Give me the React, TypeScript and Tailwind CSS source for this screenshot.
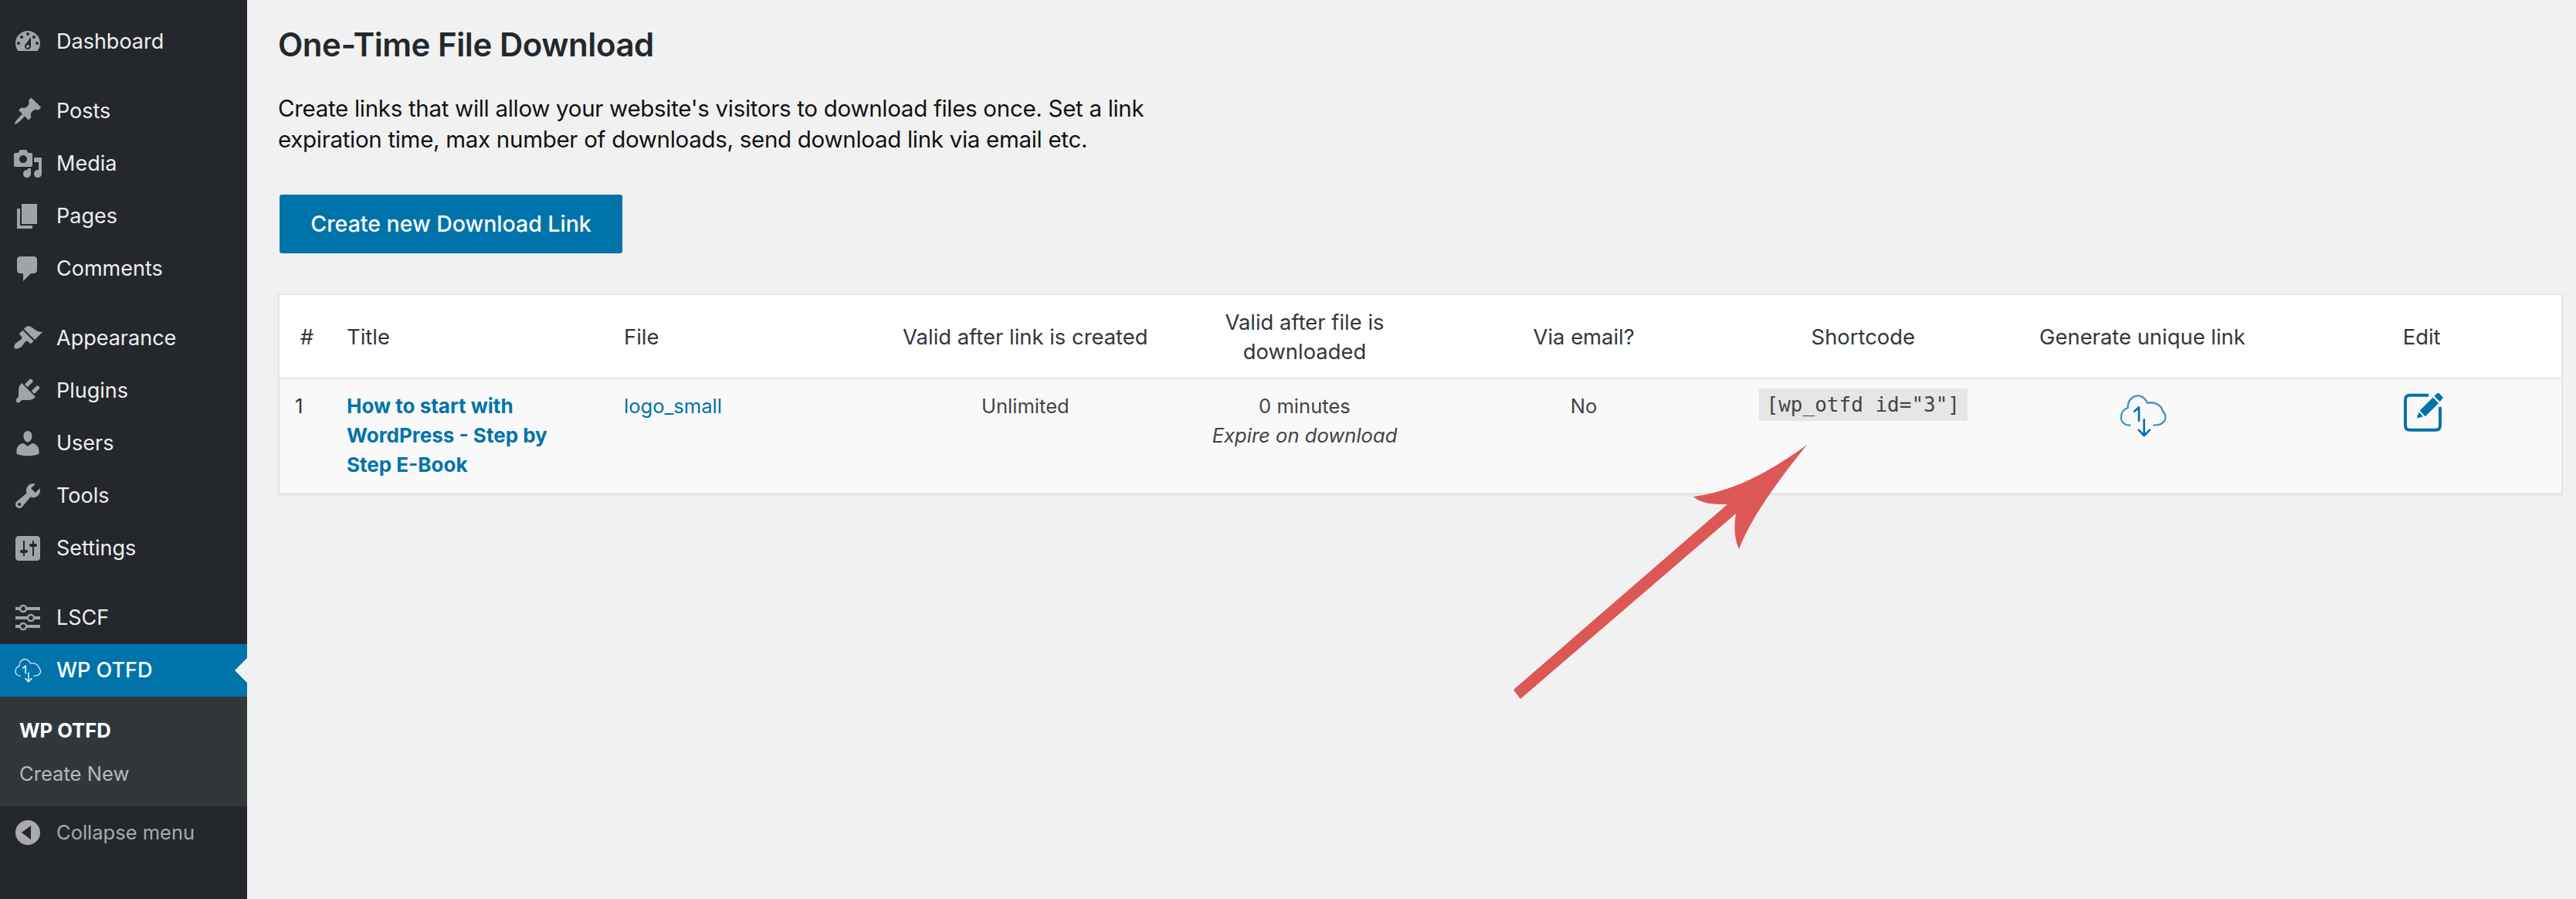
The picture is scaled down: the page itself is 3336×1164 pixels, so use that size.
import type { ReactNode } from 'react';

const DASHICONS: Record<string, string> = {
  dashboard:
    'M3.76 16h12.48c1.1-1.37 1.76-3.11 1.76-5 0-4.42-3.58-8-8-8s-8 3.58-8 8c0 1.89.66 3.63 1.76 5zM10 4c.55 0 1 .45 1 1s-.45 1-1 1-1-.45-1-1 .45-1 1-1zM6 6c.55 0 1 .45 1 1s-.45 1-1 1-1-.45-1-1 .45-1 1-1zm8 0c.55 0 1 .45 1 1s-.45 1-1 1-1-.45-1-1 .45-1 1-1zm-5.37 5.55L12 7v6c0 1.1-.9 2-2 2s-2-.9-2-2c0-.57.24-1.08.63-1.45zM4 10c.55 0 1 .45 1 1s-.45 1-1 1-1-.45-1-1 .45-1 1-1zm12 0c.55 0 1 .45 1 1s-.45 1-1 1-1-.45-1-1 .45-1 1-1zm-5 3c0-.55-.45-1-1-1s-1 .45-1 1 .45 1 1 1 1-.45 1-1z',
  posts:
    'M10.44 3.02l1.82-1.82 6.36 6.35-1.83 1.82c-1.05-.68-2.48-.57-3.41.36l-.75.75c-.92.93-1.04 2.35-.35 3.41l-1.83 1.82-2.41-2.41-2.8 2.79c-.42.42-3.38 2.71-3.8 2.29s1.86-3.39 2.28-3.81l2.79-2.79L4.1 9.36l1.83-1.82c1.05.69 2.48.57 3.4-.36l.75-.75c.93-.92 1.05-2.35.36-3.41z',
  media:
    'M13 11V4c0-.55-.45-1-1-1h-1.67L9 1H5L3.67 3H2c-.55 0-1 .45-1 1v7c0 .55.45 1 1 1h10c.55 0 1-.45 1-1zM7 4.5c1.38 0 2.5 1.12 2.5 2.5S8.38 9.5 7 9.5 4.5 8.38 4.5 7 5.62 4.5 7 4.5zM14 6h5v10.5c0 1.38-1.12 2.5-2.5 2.5S14 17.88 14 16.5s1.12-2.5 2.5-2.5c.17 0 .34.02.5.05V9h-3V6zm-4 8.05V13h2v3.5c0 1.38-1.12 2.5-2.5 2.5S7 17.88 7 16.5 8.12 14 9.5 14c.17 0 .34.02.5.05z',
  pages: 'M6 15V2h10v13H6zm-1 1h8v2H3V5h2v11z',
  comments:
    'M5 2h9c1.1 0 2 .9 2 2v7c0 1.1-.9 2-2 2h-2l-5 5v-5H5c-1.1 0-2-.9-2-2V4c0-1.1.9-2 2-2z',
  appearance:
    'M14.48 11.06L7.41 3.99l1.5-1.5c.5-.56 2.3-.47 3.51.32 1.21.8 1.43 1.28 2.91 2.1 1.18.64 2.45 1.26 4.45.85zm-.71.71L6.7 4.7 4.93 6.47c-.39.39-.39 1.02 0 1.41l1.06 1.06c.39.39.39 1.03 0 1.42-.6.6-1.43 1.11-2.21 1.69-.35.26-.7.53-1.01.84C1.43 13.23.78 15.78 1.5 16.5c.72.72 3.27.07 4.61-1.27.31-.31.58-.66.84-1.01.58-.78 1.09-1.61 1.69-2.21.39-.39 1.02-.39 1.41 0l1.06 1.06c.39.39 1.02.39 1.41 0z',
  plugins:
    'M13.11 4.36L9.87 7.6 8 5.73l3.24-3.24c.35-.34 1.05-.2 1.56.32.52.51.66 1.21.31 1.55zm-8 1.77l.91-1.12 9.01 9.01-1.19.84c-.71.71-2.63 1.16-3.82 1.16H6.14L4.9 17.26c-.59.59-1.54.59-2.12 0-.59-.58-.59-1.53 0-2.12l1.24-1.24v-3.88c0-1.13.4-3.19 1.09-3.89zm7.26 3.97l3.24-3.24c.34-.35 1.04-.21 1.55.31.52.51.66 1.21.31 1.55l-3.24 3.25z',
  users:
    'M10 9.25c-2.27 0-2.73-3.44-2.73-3.44C7 4.02 7.82 2 9.97 2c2.16 0 2.98 2.02 2.71 3.81 0 0-.41 3.44-2.68 3.44zm0 2.57L12.72 10c2.39 0 4.52 2.33 4.52 4.53v2.49s-3.65 1.13-7.24 1.13c-3.65 0-7.24-1.13-7.24-1.13v-2.49c0-2.25 1.94-4.48 4.47-4.48z',
  tools:
    'M16.68 9.77c-1.34 1.34-3.3 1.67-4.95.99l-5.41 6.52c-.99.99-2.59.99-3.58 0s-.99-2.59 0-3.57l6.52-5.42c-.68-1.65-.35-3.61.99-4.95 1.28-1.28 3.12-1.62 4.72-1.06l-2.89 2.89 2.82 2.82 2.86-2.87c.53 1.58.18 3.39-1.08 4.65zM3.81 16.21c.4.39 1.04.39 1.43 0 .4-.4.4-1.04 0-1.43-.39-.4-1.03-.4-1.43 0-.39.39-.39 1.03 0 1.43z',
  settings:
    'M18 16V4c0-1.1-.9-2-2-2H4c-1.1 0-2 .9-2 2v12c0 1.1.9 2 2 2h12c1.1 0 2-.9 2-2zM8 11h1c.55 0 1 .45 1 1s-.45 1-1 1H8v1.5c0 .28-.22.5-.5.5s-.5-.22-.5-.5V13H6c-.55 0-1-.45-1-1s.45-1 1-1h1V5.5c0-.28.22-.5.5-.5s.5.22.5.5V11zm5-2h-1c-.55 0-1-.45-1-1s.45-1 1-1h1V5.5c0-.28.22-.5.5-.5s.5.22.5.5V7h1c.55 0 1 .45 1 1s-.45 1-1 1h-1v5.5c0 .28-.22.5-.5.5s-.5-.22-.5-.5V9z',
  collapse: 'M18 10c0-4.42-3.58-8-8-8s-8 3.58-8 8 3.58 8 8 8 8-3.58 8-8zm-6 -4.5v9L6 10z',
};

function Dashicon({ name }: { name: string }) {
  return (
    <svg viewBox="0 0 20 20" className="h-10 w-10 shrink-0 fill-current">
      <path d={DASHICONS[name]} fillRule="evenodd" />
    </svg>
  );
}

function SlidersIcon() {
  return (
    <svg viewBox="0 0 40 40" className="h-10 w-10 shrink-0">
      <path d="M4 8h32M4 20h32M4 31h32" stroke="currentColor" strokeWidth="4" />
      <circle cx="14" cy="8" r="4" fill="#24272c" stroke="currentColor" strokeWidth="2.5" />
      <circle cx="24" cy="20" r="4" fill="#24272c" stroke="currentColor" strokeWidth="2.5" />
      <circle cx="14" cy="31" r="4" fill="#24272c" stroke="currentColor" strokeWidth="2.5" />
    </svg>
  );
}

function CloudIcon({ className, cloud, arrow }: { className: string; cloud: string; arrow: string }) {
  return (
    <svg viewBox="135 58 186 172" className={className} fill="none" strokeLinecap="round" strokeLinejoin="round">
      <path
        d="M175 182 C150 182 138 165 141 145 C143 128 155 118 167 114 C165 85 190 62 213 68 C228 72 238 84 243 96 C268 88 298 104 303 128 C320 145 318 182 268 182"
        stroke={cloud}
        strokeWidth="7"
      />
      <path d="M192 128 L210 112 V165" stroke={arrow} strokeWidth="8" />
      <path d="M230 160 V222 M209 200 L230 222 L252 200" stroke={arrow} strokeWidth="8" />
    </svg>
  );
}

function EditIcon() {
  return (
    <svg viewBox="1235 52 160 160" className="h-[53px] w-[53px]" fill="none">
      <path
        d="M1335 66 H1262 Q1244 66 1244 84 V184 Q1244 202 1262 202 H1362 Q1380 202 1380 184 V112"
        stroke="#0073aa"
        strokeWidth="12"
      />
      <path d="M1300 127 L1352 75 L1374 97 L1322 149 Z M1289 156 L1297 132 L1314 149 Z M1357 70 L1368 59 Q1372 55 1376 59 L1389 72 Q1393 76 1389 80 L1379 91 Z" fill="#0073aa" />
    </svg>
  );
}

function MenuRow({ icon, label }: { icon: ReactNode; label: string }) {
  return (
    <div className="flex h-[68px] items-center pl-4 text-[27px] text-[#eeeeee]">
      <span className="flex w-[57px] text-[#a0a5aa]">{icon}</span>
      <span>{label}</span>
    </div>
  );
}

function Sidebar() {
  return (
    <aside className="flex w-80 shrink-0 flex-col bg-[#24272c] pt-5">
      <MenuRow icon={<Dashicon name="dashboard" />} label="Dashboard" />
      <div className="mt-[22px]">
        {(
          [
            ['posts', 'Posts'],
            ['media', 'Media'],
            ['pages', 'Pages'],
            ['comments', 'Comments'],
          ] as const
        ).map(([icon, label]) => (
          <MenuRow key={label} icon={<Dashicon name={icon} />} label={label} />
        ))}
      </div>
      <div className="mt-[22px]">
        {(
          [
            ['appearance', 'Appearance'],
            ['plugins', 'Plugins'],
            ['users', 'Users'],
            ['tools', 'Tools'],
            ['settings', 'Settings'],
          ] as const
        ).map(([icon, label]) => (
          <MenuRow key={label} icon={<Dashicon name={icon} />} label={label} />
        ))}
      </div>
      <div className="mt-[22px]">
        <MenuRow icon={<SlidersIcon />} label="LSCF" />
        <div className="relative flex h-[68px] items-center bg-[#0073aa] pl-[19px] text-[27px] font-medium text-white">
          <span className="flex w-[54px]">
            <CloudIcon className="h-[34px] w-[35px]" cloud="#d5e6ef" arrow="#ffffff" />
          </span>
          <span>WP OTFD</span>
          <span className="absolute right-0 top-[18px] border-y-16 border-r-16 border-y-transparent border-r-[#f1f1f1]" />
        </div>
      </div>
      <div className="flex h-[142px] flex-col bg-[#32373c] pl-[25px] pt-4 text-[25.6px] leading-[56px]">
        <span className="font-bold text-white">WP OTFD</span>
        <span className="text-[#b4b9be]">Create New</span>
      </div>
      <div className="flex h-[68px] items-center pl-4 text-[25.5px] text-[#aaaaaa]">
        <span className="flex w-[57px] text-[#aaaaaa]">
          <Dashicon name="collapse" />
        </span>
        <span>Collapse menu</span>
      </div>
    </aside>
  );
}

function DownloadsTable() {
  return (
    <div className="mt-[52px] mr-[17px] border-2 border-[#e5e5e5] bg-white shadow-[0_2px_2px_rgba(0,0,0,0.04)]">
      <table className="w-full table-fixed border-collapse text-[27.4px] leading-[38px] text-[#32373c]">
        <colgroup>
          <col className="w-[63px]" />
          <col className="w-[359px]" />
          <col className="w-[363px]" />
          <col />
          <col />
          <col />
          <col />
          <col />
          <col />
        </colgroup>
        <thead>
          <tr className="h-[108px] border-b-2 border-[#e5e5e5] text-center">
            <th className="pl-2 font-normal">#</th>
            <th className="pl-6 text-left font-normal">Title</th>
            <th className="pl-6 text-left font-normal">File</th>
            <th className="font-normal">Valid after link is created</th>
            <th className="font-normal">
              Valid after file is
              <br />
              downloaded
            </th>
            <th className="font-normal">Via email?</th>
            <th className="font-normal">Shortcode</th>
            <th className="font-normal">Generate unique link</th>
            <th className="font-normal">Edit</th>
          </tr>
        </thead>
        <tbody>
          <tr className="h-[148px] bg-[#f9f9f9] text-center align-top text-[25.6px]">
            <td className="pl-5 pt-4 text-left">1</td>
            <td className="pl-6 pt-4 text-left text-[26px] font-bold text-[#0073aa]">
              <a className="block max-w-[280px]">How to start with WordPress - Step by Step E-Book</a>
            </td>
            <td className="pl-6 pt-4 text-left text-[#0073aa]">
              <a>logo_small</a>
            </td>
            <td className="pt-4 text-[#444444]">Unlimited</td>
            <td className="pt-4 text-[#444444]">
              0 minutes
              <br />
              <em>Expire on download</em>
            </td>
            <td className="pt-4 text-[#444444]">No</td>
            <td className="pt-3">
              <code className="inline-block bg-[#e6e6e6] px-[10px] font-['DejaVu_Sans_Mono',monospace] text-[26px] leading-[42px] text-[#444444]">
                [wp_otfd id="3"]
              </code>
            </td>
            <td className="pl-1 pt-[18px]">
              <CloudIcon className="mx-auto h-[58px] w-[62px]" cloud="#3f94c2" arrow="#0073aa" />
            </td>
            <td className="pl-1 pt-4">
              <span className="flex justify-center">
                <EditIcon />
              </span>
            </td>
          </tr>
        </tbody>
      </table>
    </div>
  );
}

export default function App() {
  return (
    <div className="relative flex min-h-[1164px] w-[3336px] overflow-hidden bg-[#f1f1f1] font-['Inter',sans-serif]">
      <Sidebar />
      <main className="min-w-0 flex-1 pl-10">
        <h1 className="mt-[34px] text-[42px] font-semibold leading-[48px] tracking-[-0.45px] text-[#23282d]">One-Time File Download</h1>
        <p className="mt-[38px] max-w-[1160px] text-[29.5px] leading-[40px] tracking-[-0.3px] text-[#111111]">
          Create links that will allow your website's visitors to download files once. Set a link expiration time, max
          number of downloads, send download link via email etc.
        </p>
        <button className="ml-[2px] mt-[52px] block h-[76px] w-[444px] rounded-[3px] bg-[#0073aa] text-[28.5px] font-medium text-white">
          Create new Download Link
        </button>
        <DownloadsTable />
      </main>
      {/* annotation arrow over the page */}
      <svg viewBox="0 0 3336 1164" className="pointer-events-none absolute left-0 top-0 h-[1164px] w-[3336px]">
        <path
          d="M1960 893 L2237 653 C2218 653 2202 652 2193 643 C2250 636 2300 605 2340 576 C2305 620 2270 665 2252 711 C2245 695 2246 680 2248 665 L1969 905 Z"
          fill="#dd5757"
        />
      </svg>
    </div>
  );
}
